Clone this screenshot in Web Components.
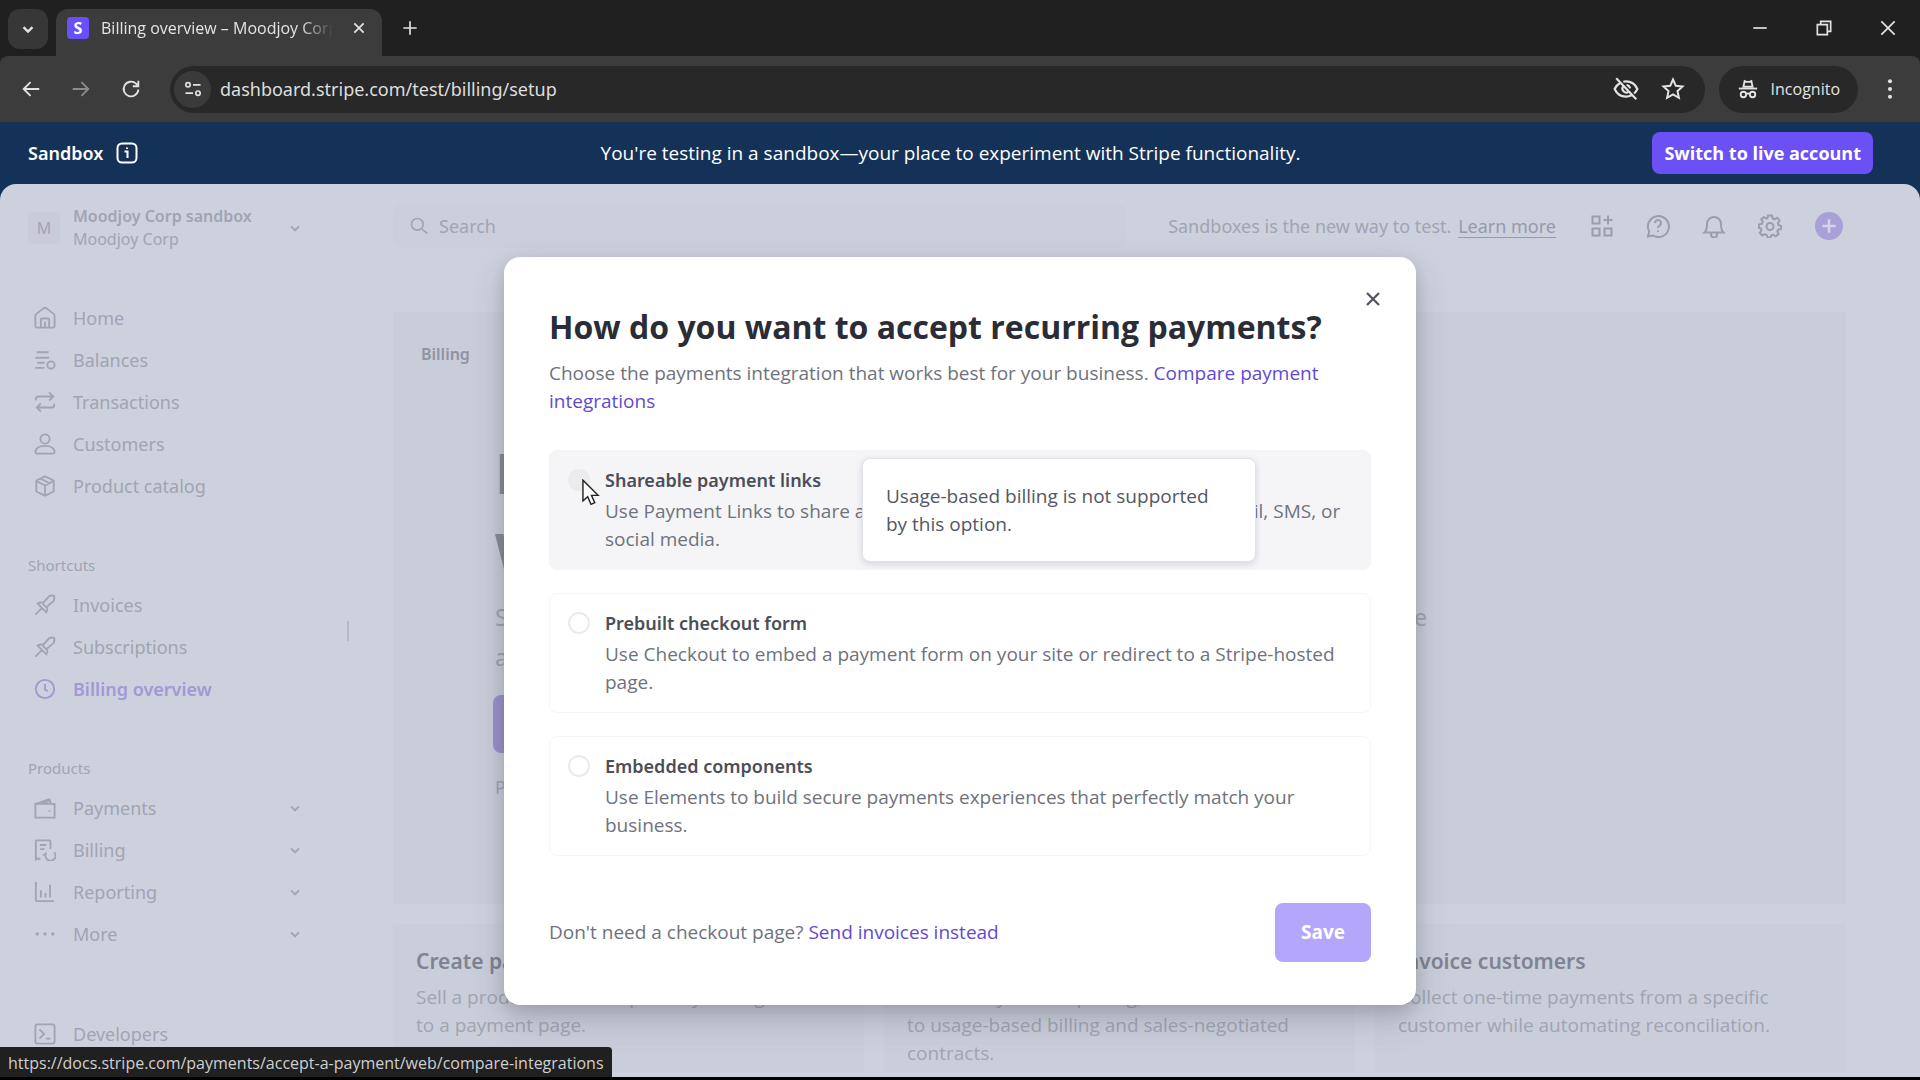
<!DOCTYPE html>
<html lang="en">
<head>
<meta charset="utf-8">
<title>Billing overview</title>
<style>
    html, body { margin: 0; height: 100%; }

    body {
        display: flex;
        flex-direction: column;
        min-height: 100vh;
        background: #000;
        font-family: "Noto Sans", "Open Sans", sans-serif;
        font-size: 18px;
        line-height: 28px;
        overflow: hidden;
    }
</style>
</head>
<body>
<browser-chrome page-title="Billing overview – Moodjoy Corp"></browser-chrome>
<sandbox-banner>You're testing in a sandbox—your place to experiment with Stripe functionality.</sandbox-banner>
<dashboard-shell>
    <side-nav slot="nav"></side-nav>
    <top-bar slot="top"></top-bar>
    <billing-page></billing-page>
    <payment-dialog slot="dialog"></payment-dialog>
    <status-bubble slot="status">https://docs.stripe.com/payments/accept-a-payment/web/compare-integrations</status-bubble>
</dashboard-shell>

<script>
/* Icon paths, drawn on a 24x24 grid */
const ICONS = {
    chevron: '<path d="M6 9.500l6 6 6-6"/>',
    close: '<path d="M4 4l16 16M20 4L4 20"/>',
    plus: '<path d="M12 4v16M4 12h16"/>',
    minimize: '<path d="M4 12h16"/>',
    restore: '<path d="M4 8h12v12H4zM8 8V4h12v12h-4"/>',
    back: '<path d="M21 12H4M11.500 4.500L4 12l7.500 7.500"/>',
    forward: '<path d="M3 12h17M12.500 4.500L20 12l-7.500 7.500"/>',
    reload: '<path d="M20 12.500a8 8 0 1 1-2.500-6.300L20 8.500M20 3v6h-6"/>',
    tune: '<circle cx="6" cy="7" r="2.600"/><path d="M12 7h9M3 17h9"/><circle cx="18" cy="17" r="2.600"/>',
    eyeOff: '<path d="M6.500 6.500C4 8 2.300 10 1.500 12c1.800 4 5.800 7 10.500 7 1.800 0 3.500-.4 5-1.200M9.500 5.300C10.300 5.100 11.100 5 12 5c4.700 0 8.700 3 10.500 7a12 12 0 0 1-3 4.100M3 2l18.500 19.500"/><path d="M9.300 9.500a3.700 3.700 0 0 0 5 5.200M12.500 8.300a3.700 3.700 0 0 1 3.200 3.200"/>',
    star: '<path d="M12 2.500l2.800 6.300 6.700.7-5 4.600 1.400 6.700L12 17.300l-5.900 3.500 1.400-6.700-5-4.600 6.700-.7z"/>',
    incognito: '<path d="M7 9.500l1.300-6.200 2 .9h3.400l2-.9L17 9.500z"/><path d="M2 11.500h20"/><circle cx="7" cy="18" r="3"/><circle cx="17" cy="18" r="3"/><path d="M10 17.500q2-1.200 4 0"/>',
    dots: '<g fill="currentColor" stroke="none"><circle cx="12" cy="3.500" r="2.200"/><circle cx="12" cy="12" r="2.200"/><circle cx="12" cy="20.500" r="2.200"/></g>',
    info: '<rect x="2.500" y="2.500" width="19" height="19" rx="4.500"/><path d="M9.500 10.500h3v6.500M12 6.500v1.500"/>',
    search: '<circle cx="10" cy="10" r="7"/><path d="M15.500 15.500L22 21"/>',
    home: '<path d="M1.500 9.500v11a2 2 0 0 0 2 2h17a2 2 0 0 0 2-2v-11a3 3 0 0 0-1-2L14 1.800a3 3 0 0 0-4 0L2.500 7.500a3 3 0 0 0-1 2z"/><path d="M7.500 22v-8.500a1 1 0 0 1 1-1h7a1 1 0 0 1 1 1V22M12 16v6"/>',
    balances: '<path d="M3 3.500h13M1.500 9.500h15M3.500 15h8M1.500 20.500h10"/><circle cx="18.500" cy="17.500" r="4"/>',
    transactions: '<path d="M2 10V8.500a2.500 2.500 0 0 1 2.500-2.500H21M16.500 1.500L21 6l-4.500 4.500M22 14v1.500a2.500 2.500 0 0 1-2.500 2.500H3M7.500 13.500L3 18l4.500 4.500"/>',
    customers: '<circle cx="12" cy="6.500" r="5"/><path d="M1.500 20.500C2 16.500 5.500 14 12 14s10 2.500 10.500 6.500c0 1.200-.8 2-2 2h-17c-1.200 0-2-.8-2-2z"/>',
    box: '<path d="M12 1.500l9.500 4.500v12L12 22.500 2.500 18V6zM2.500 6.500L12 11.500l9.500-5M12 11.500v11M7 3.800l9.500 5"/>',
    pin: '<path d="M1.500 22.500l7-7M4 10.500l9.500 9.500c1-1.500 1.500-3.500.5-6l7.500-6.500c1-1.500 1-3.500.5-5.500-2-.5-4-.5-5.500.5L10 9.500c-2.500-.5-4.500 0-6 1zM9.500 10.500l4 4"/>',
    clock: '<circle cx="12" cy="12" r="10"/><path d="M12 6.500v6l3 2"/>',
    wallet: '<path d="M1.500 7.500h21v15h-21zM2 7.500l14-5a1 1 0 0 1 1.300.7L18.500 7.500M9 7l9-3M17 14.500v1.500"/>',
    billing: '<path d="M7 22.500l-2.500-1.500-2.500 1.500v-20a1 1 0 0 1 1-1h14a1 1 0 0 1 1 1V11M6.500 6.500h7M6.500 11h5"/><path d="M22 14.500a5.500 5.500 0 1 1-9.500 3.500M9.500 17l3 .5.500-3"/>',
    report: '<path d="M2 1v20a1 1 0 0 0 1 1h19M7.500 18v-8M12.500 18v-5M17.500 18V4"/>',
    more: '<g fill="currentColor" stroke="none"><circle cx="3.500" cy="12" r="1.800"/><circle cx="12" cy="12" r="1.800"/><circle cx="20.500" cy="12" r="1.800"/></g>',
    terminal: '<rect x="1.500" y="1.500" width="21" height="21" rx="2.500"/><path d="M6 7l5 5-5 5M13 17h5"/>',
    apps: '<path d="M2.500 2.500h7v7h-7zM2.500 14.500h7v7h-7zM14.500 14.500h7v7h-7zM18 1.500v9M13.500 6h9"/>',
    help: '<path d="M2 22.500l1.200-5A10.500 10.500 0 1 1 7 21.500z"/><path d="M9 9a3 3 0 1 1 4.500 2.600c-1 .6-1.500 1.200-1.500 2.400M12 16.500v1.500"/>',
    bell: '<path d="M2.500 18.500c2-2 2.500-4 2.500-8.500a7 7 0 0 1 14 0c0 4.500.5 6.500 2.500 8.500zM9 19v1.500a3 3 0 0 0 6 0V19"/>',
    gear: '<path d="M10 1.500h4l.7 3 1.800.8 2.800-1.600 2.300 2.800-1.700 2.600.6 1.900 2.600 1v3l-3 .7-.8 1.800 1.200 2.500-2.700 2.300-2.700-1.600-1.800.8-.7 2h-3l-.9-2.500-1.800-.8-2.700 1.300-2.300-2.600 1.600-2.700-.7-1.800L1 14v-3.500l3-.8.8-1.800-1.500-2.600 2.500-2.200 2.600 1.500 1-.5z"/><circle cx="12" cy="12.500" r="3.500"/>'
};

class AppIcon extends HTMLElement {
    connectedCallback() {
        const size = this.getAttribute('size') || 22;
        const weight = this.getAttribute('weight') || 2;
        this.attachShadow({ mode: 'open' }).innerHTML = `
            <style>
                :host { display: inline-flex; flex: none; }
            </style>
            <svg width="${size}" height="${size}" viewBox="0 0 24 24" fill="none" stroke="currentColor"
                 stroke-width="${weight}" aria-hidden="true">${ICONS[this.getAttribute('name')]}</svg>
        `;
    }
}

/* Tab strip and address row of the browser window */
class BrowserChrome extends HTMLElement {
    connectedCallback() {
        this.attachShadow({ mode: 'open' }).innerHTML = `
            <style>
                :host { display: block; flex: none; background: #202020; color: #e3e3e3; font-family: "Open Sans", sans-serif; font-size: 16px; line-height: 24px; }

                button { border: 0; padding: 0; background: none; color: inherit; font: inherit; display: flex; align-items: center; justify-content: center; }

                .tabs { display: flex; align-items: flex-end; height: 56px; padding-left: 8px; }
                .list { width: 40px; height: 40px; margin: 0 8px 7px 0; border-radius: 12px; background: #373737; }
                .tab { display: flex; align-items: center; width: 304px; height: 38px; padding: 0 11px 9px; border-radius: 12px 12px 0 0; background: #3c3c3c; }
                .favicon { width: 22px; height: 22px; border-radius: 4px; background: #6a50fb; color: #fff; font-weight: 700; line-height: 22px; text-align: center; }
                .title { flex: 1; margin-left: 12px; margin-right: 14px; overflow: hidden; white-space: nowrap; -webkit-mask: linear-gradient(90deg, #000 86%, transparent); mask: linear-gradient(90deg, #000 86%, transparent); }
                .tab button { width: 24px; height: 24px; }
                .new { width: 40px; height: 40px; margin: 0 auto 8px 8px; }
                .window { display: flex; height: 56px; }
                .window button { width: 64px; }

                .row { display: flex; align-items: center; height: 66px; padding: 0 5px 0 6px; background: #3c3c3c; border-radius: 8px 8px 0 0; }
                .row > button { width: 50px; height: 40px; }
                .dim { color: #8b8b8b; }
                .address { display: flex; flex: 1; align-items: center; height: 47px; margin-left: 14px; padding: 0 20px 0 4px; border-radius: 24px; background: #282828; gap: 22px; }
                .site { width: 37px; height: 37px; border-radius: 50%; background: #3a3a3a; }
                input { flex: 1; min-width: 0; margin-left: -13px; padding: 0; border: 0; outline: 0; background: none; color: #dedede; font: 18px/28px "Noto Sans", sans-serif; }
                .private { display: flex; align-items: center; height: 47px; margin: 0 7px 0 14px; padding: 0 18px; border-radius: 24px; background: #282828; gap: 12px; }
            </style>
            <div class="tabs">
                <button class="list" aria-label="Search tabs"><app-icon name="chevron" size="18" weight="3"></app-icon></button>
                <div class="tab">
                    <span class="favicon">S</span>
                    <span class="title">${this.getAttribute('page-title')}</span>
                    <button aria-label="Close tab"><app-icon name="close" size="14" weight="3"></app-icon></button>
                </div>
                <button class="new" aria-label="New tab"><app-icon name="plus" size="20" weight="2"></app-icon></button>
                <div class="window">
                    <button aria-label="Minimize"><app-icon name="minimize" size="20" weight="2"></app-icon></button>
                    <button aria-label="Restore"><app-icon name="restore" size="20" weight="2"></app-icon></button>
                    <button aria-label="Close"><app-icon name="close" size="20" weight="2"></app-icon></button>
                </div>
            </div>
            <div class="row">
                <button aria-label="Back"><app-icon name="back"></app-icon></button>
                <button class="dim" aria-label="Forward"><app-icon name="forward"></app-icon></button>
                <button aria-label="Reload"><app-icon name="reload"></app-icon></button>
                <div class="address">
                    <button class="site" aria-label="Site information"><app-icon name="tune" size="20" weight="2"></app-icon></button>
                    <input aria-label="Address" value="dashboard.stripe.com/test/billing/setup">
                    <button aria-label="Third-party cookies"><app-icon name="eyeOff" size="26"></app-icon></button>
                    <button aria-label="Bookmark"><app-icon name="star" size="24"></app-icon></button>
                </div>
                <div class="private"><app-icon name="incognito"></app-icon>Incognito</div>
                <button aria-label="Menu"><app-icon name="dots"></app-icon></button>
            </div>
        `;
    }
}

class SandboxBanner extends HTMLElement {
    connectedCallback() {
        this.attachShadow({ mode: 'open' }).innerHTML = `
            <style>
                :host { display: grid; grid-template-columns: 1fr auto 1fr; flex: none; align-items: center; height: 62px; padding: 0 47px 0 28px; background: #143257; color: #fff; }
                .label { display: flex; align-items: center; gap: 12px; font-weight: 600; }
                .message { font: 19px/28px "Open Sans", sans-serif; }
                button { justify-self: end; height: 42px; padding: 0 12px; border: 0; border-radius: 8px; background: #6a50f5; color: #fff; font: 700 18px/28px "Open Sans", sans-serif; }
            </style>
            <div class="label">Sandbox <app-icon name="info" size="24"></app-icon></div>
            <div class="message"><slot></slot></div>
            <button>Switch to live account</button>
        `;
    }
}

class DashboardShell extends HTMLElement {
    connectedCallback() {
        this.attachShadow({ mode: 'open' }).innerHTML = `
            <style>
                :host { display: block; flex: 1; min-height: 0; margin-bottom: 3px; background: #143257; }
                .sheet { position: relative; display: flex; height: 100%; border-radius: 16px 16px 0 0; background: #cdd1dd; color: #a0a4b3; overflow: hidden; }
                .main { flex: 1; min-width: 0; }
                .overlay { position: absolute; inset: 0; display: flex; align-items: center; justify-content: center; }
                .status { position: absolute; left: 0; bottom: 0; }
            </style>
            <div class="sheet">
                <slot name="nav"></slot>
                <div class="main">
                    <slot name="top"></slot>
                    <slot></slot>
                </div>
                <div class="overlay"><slot name="dialog"></slot></div>
                <div class="status"><slot name="status"></slot></div>
            </div>
        `;
    }
}

/**
 * Sidebar link
 * @attribute {string} icon - Name of the icon
 * @attribute {boolean} active - Marks the current page
 * @attribute {boolean} expandable - Shows a chevron at the end
 */
class NavItem extends HTMLElement {
    connectedCallback() {
        this.attachShadow({ mode: 'open' }).innerHTML = `
            <style>
                :host { display: block; }
                a { display: flex; align-items: center; gap: 17px; height: 42px; padding: 0 10px 0 6px; color: #a0a4b3; text-decoration: none; }
                .text { flex: 1; }
                :host([active]) a { color: #a298d5; font-weight: 600; }
            </style>
            <a href="#">
                <app-icon name="${this.getAttribute('icon')}"></app-icon>
                <span class="text"><slot></slot></span>
                ${this.hasAttribute('expandable') ? '<app-icon name="chevron" size="16" weight="3"></app-icon>' : ''}
            </a>
        `;
    }
}

class SideNav extends HTMLElement {
    connectedCallback() {
        this.attachShadow({ mode: 'open' }).innerHTML = `
            <style>
                :host { display: flex; flex: none; width: 349px; }
                nav { flex: 1; padding: 21px 34px 0 28px; }
                .account { display: flex; align-items: center; width: 100%; height: 46px; margin-bottom: 46px; padding: 0 10px 0 0; border: 0; background: none; color: inherit; font: inherit; font-size: 16px; line-height: 23px; text-align: left; gap: 13px; }
                .logo { width: 32px; height: 32px; border-radius: 4px; background: #cacbd8; line-height: 32px; text-align: center; }
                .name { flex: 1; white-space: nowrap; }
                .name b { display: block; font-weight: 600; }
                h2 { margin: 45px 0 6px; font-size: 15px; line-height: 26px; font-weight: 400; }
                .tools { margin-top: 58px; }
                .handle { align-self: center; width: 2px; height: 20px; background: #b4b8c6; }
            </style>
            <nav aria-label="Dashboard">
                <button class="account">
                    <span class="logo">M</span>
                    <span class="name"><b>Moodjoy Corp sandbox</b>Moodjoy Corp</span>
                    <app-icon name="chevron" size="16" weight="3"></app-icon>
                </button>
                <nav-item icon="home">Home</nav-item>
                <nav-item icon="balances">Balances</nav-item>
                <nav-item icon="transactions">Transactions</nav-item>
                <nav-item icon="customers">Customers</nav-item>
                <nav-item icon="box">Product catalog</nav-item>
                <h2>Shortcuts</h2>
                <nav-item icon="pin">Invoices</nav-item>
                <nav-item icon="pin">Subscriptions</nav-item>
                <nav-item icon="clock" active>Billing overview</nav-item>
                <h2>Products</h2>
                <nav-item icon="wallet" expandable>Payments</nav-item>
                <nav-item icon="billing" expandable>Billing</nav-item>
                <nav-item icon="report" expandable>Reporting</nav-item>
                <nav-item icon="more" expandable>More</nav-item>
                <nav-item class="tools" icon="terminal">Developers</nav-item>
            </nav>
            <div class="handle"></div>
        `;
    }
}

class TopBar extends HTMLElement {
    connectedCallback() {
        this.attachShadow({ mode: 'open' }).innerHTML = `
            <style>
                :host { display: flex; align-items: center; height: 44px; padding: 20px 77px 0 44px; gap: 28px; }
                label { display: flex; flex: 1; align-items: center; gap: 10px; height: 44px; padding: 0 16px; border-radius: 8px; background: #cbcfdc; }
                input { flex: 1; padding: 0; border: 0; outline: 0; background: none; color: inherit; font: inherit; }
                input::placeholder { color: #a0a4b3; opacity: 1; }
                .note { margin: 0 4px 0 14px; }
                a { margin-left: 2px; color: #969aa9; text-underline-offset: 4px; }
                button { display: flex; align-items: center; justify-content: center; width: 28px; height: 28px; padding: 0; border: 0; background: none; color: #999dac; }
                .create { margin-left: 3px; border-radius: 50%; background: #a9a0d8; color: #d5d3e8; }
            </style>
            <label><app-icon name="search" size="20" weight="2"></app-icon><input type="search" placeholder="Search" aria-label="Search"></label>
            <span class="note">Sandboxes is the new way to test. <a href="#">Learn more</a></span>
            <button aria-label="Apps"><app-icon name="apps" size="24"></app-icon></button>
            <button aria-label="Help"><app-icon name="help" size="24"></app-icon></button>
            <button aria-label="Notifications"><app-icon name="bell" size="24"></app-icon></button>
            <button aria-label="Settings"><app-icon name="gear" size="24"></app-icon></button>
            <button class="create" aria-label="Create"><app-icon name="plus" size="20" weight="3"></app-icon></button>
        `;
    }
}

class FeatureCard extends HTMLElement {
    connectedCallback() {
        this.attachShadow({ mode: 'open' }).innerHTML = `
            <style>
                :host { display: block; padding: 23px 23px 5px; background: #cacedb; }
                h3 { margin: 0 0 8px; color: #7f8394; font-size: 21px; line-height: 28px; font-weight: 600; }
                p { margin: 0; font: 19px/28px "Open Sans", sans-serif; white-space: nowrap; }
            </style>
            <h3>${this.getAttribute('heading')}</h3>
            <p><slot></slot></p>
        `;
    }
}

class BillingPage extends HTMLElement {
    connectedCallback() {
        this.attachShadow({ mode: 'open' }).innerHTML = `
            <style>
                :host { display: block; padding: 64px 74px 0 44px; }
                .hero { height: 592px; padding: 28px 28px 0; box-sizing: border-box; background: #c9cdd9; }
                .crumb { font-size: 16px; font-weight: 600; color: #8f93a3; }
                .intro { width: 932px; margin: 64px 0 0 74px; }
                h1 { margin: 0; color: #8b8a98; font-size: 56px; line-height: 80px; font-weight: 700; }
                p { display: flex; justify-content: space-between; margin: 5px 0 0; font-size: 23px; line-height: 40px; }
                p + p { margin: 0; }
                button { display: block; width: 200px; height: 58px; margin: 18px 0 20px -2px; border: 0; border-radius: 8px; background: #9b91cd; }
                .cards { display: grid; grid-template-columns: repeat(3, 1fr); gap: 20px; padding-top: 20px; }
            </style>
            <section class="hero">
                <div class="crumb">Billing</div>
                <div class="intro">
                    <h1>P<br>W</h1>
                    <p><span>S</span><span>e</span></p>
                    <p><span>a</span></p>
                    <button aria-label="Get started"></button>
                    <div>P</div>
                </div>
            </section>
            <section class="cards">
                <feature-card heading="Create payment links">Sell a product or subscription by linking<br>to a payment page.</feature-card>
                <feature-card heading="Set up billing">Offer every kind of pricing, from flat rate<br>to usage-based billing and sales-negotiated<br>contracts.</feature-card>
                <feature-card heading="Invoice customers">Collect one-time payments from a specific<br>customer while automating reconciliation.</feature-card>
            </section>
        `;
    }
}

/**
 * One radio choice of the dialog
 * @attribute {string} value - Value of the radio
 * @attribute {string} heading - Bold first line
 * @attribute {boolean} hovered - Grey state under the pointer
 */
class PaymentOption extends HTMLElement {
    connectedCallback() {
        this.attachShadow({ mode: 'open' }).innerHTML = `
            <style>
                :host { display: block; position: relative; box-sizing: border-box; border: 1px solid #f6f6f8; border-radius: 8px; background: #fff; }
                :host([hovered]) { border-color: #f5f5f8; background: #f5f5f8; }
                label { display: grid; grid-template-columns: auto 1fr; column-gap: 15px; padding: 15px 18px 16px; }
                input { appearance: none; width: 22px; height: 22px; margin: 3px 0 0; border: 2px solid #ebebee; border-radius: 50%; background: #fff; }
                :host([hovered]) input { background: #ececef; }
                b { display: block; margin-bottom: 3px; color: #4c4e57; font: 600 18px/28px "Noto Sans", sans-serif; }
                .text { color: #6f727c; }
            </style>
            <label>
                <input type="radio" name="integration" value="${this.getAttribute('value')}">
                <span class="text"><b>${this.getAttribute('heading')}</b><slot></slot></span>
            </label>
            <slot name="tip"></slot>
        `;
    }
}

class HoverTip extends HTMLElement {
    connectedCallback() {
        this.attachShadow({ mode: 'open' }).innerHTML = `
            <style>
                :host { position: absolute; top: 7px; left: 312px; z-index: 1; box-sizing: border-box; width: 394px; padding: 23px 44px 23px 23px; border: 1px solid #e2e3e9; border-radius: 8px; background: #fff; box-shadow: 0 2px 6px rgba(60, 66, 87, .18); color: #545762; }
            </style>
            <slot></slot>
        `;
    }
}

/* Mouse pointer, lies over the first radio */
class MousePointer extends HTMLElement {
    connectedCallback() {
        this.attachShadow({ mode: 'open' }).innerHTML = `
            <style>
                :host { position: absolute; top: 28px; left: 32px; z-index: 2; line-height: 0; }
            </style>
            <svg width="18" height="27" viewBox="0 0 19 28" aria-hidden="true">
                <path d="M1 1v22l5-4.500 3.500 8 4-1.800-3.500-7.700h7z" fill="#fff" stroke="#222" stroke-width="1.500"/>
            </svg>
        `;
    }
}

class PaymentDialog extends HTMLElement {
    connectedCallback() {
        this.attachShadow({ mode: 'open' }).innerHTML = `
            <style>
                :host { display: block; box-sizing: border-box; width: 912px; padding: 31px 45px 43px; border-radius: 16px; background: #fff; color: #6f727c; font: 19px/28px "Open Sans", sans-serif; box-shadow: 0 15px 35px rgba(48, 49, 61, .2), 0 5px 15px rgba(0, 0, 0, .12); }
                button { border: 0; font: inherit; }
                .close { display: flex; align-items: center; justify-content: center; width: 22px; height: 22px; margin: 0 -13px 0 auto; padding: 0; background: none; color: #53555f; }
                .close + h2 { margin: -6px 0 9px; color: #2b2d36; font-size: 32px; line-height: 46px; font-weight: 700; }
                p { margin: 0; }
                a { color: #6249d2; text-decoration: none; }
                .options { display: grid; gap: 23px; margin: 35px 0 47px; }
                footer { display: flex; align-items: center; justify-content: space-between; }
                .save { width: 96px; height: 59px; border-radius: 8px; background: #b3a6fb; color: #fff; font-weight: 700; }
            </style>
            <button class="close" aria-label="Close"><app-icon name="close" size="18" weight="3"></app-icon></button>
            <h2>How do you want to accept recurring payments?</h2>
            <p>Choose the payments integration that works best for your business. <a href="#">Compare payment integrations</a></p>
            <div class="options">
                <payment-option value="links" heading="Shareable payment links" hovered>
                    Use Payment Links to share a link for your pages with consumers via email, SMS, or social media.
                    <hover-tip slot="tip">Usage-based billing is not supported by this option.</hover-tip>
                    <mouse-pointer slot="tip"></mouse-pointer>
                </payment-option>
                <payment-option value="checkout" heading="Prebuilt checkout form">Use Checkout to embed a payment form on your site or redirect to a Stripe-hosted page.</payment-option>
                <payment-option value="elements" heading="Embedded components">Use Elements to build secure payments experiences that perfectly match your business.</payment-option>
            </div>
            <footer>
                <span>Don't need a checkout page? <a href="#">Send invoices instead</a></span>
                <button class="save">Save</button>
            </footer>
        `;
    }
}

class StatusBubble extends HTMLElement {
    connectedCallback() {
        this.attachShadow({ mode: 'open' }).innerHTML = `
            <style>
                :host { display: block; padding: 2px 8px 0; border-radius: 0 4px 0 0; background: #202020; color: #cfcfcf; font-family: "Open Sans", sans-serif; font-size: 16px; line-height: 28px; }
            </style>
            <slot></slot>
        `;
    }
}

customElements.define('app-icon', AppIcon);
customElements.define('browser-chrome', BrowserChrome);
customElements.define('sandbox-banner', SandboxBanner);
customElements.define('nav-item', NavItem);
customElements.define('side-nav', SideNav);
customElements.define('top-bar', TopBar);
customElements.define('feature-card', FeatureCard);
customElements.define('billing-page', BillingPage);
customElements.define('hover-tip', HoverTip);
customElements.define('mouse-pointer', MousePointer);
customElements.define('payment-option', PaymentOption);
customElements.define('payment-dialog', PaymentDialog);
customElements.define('status-bubble', StatusBubble);
customElements.define('dashboard-shell', DashboardShell);
</script>
</body>
</html>
